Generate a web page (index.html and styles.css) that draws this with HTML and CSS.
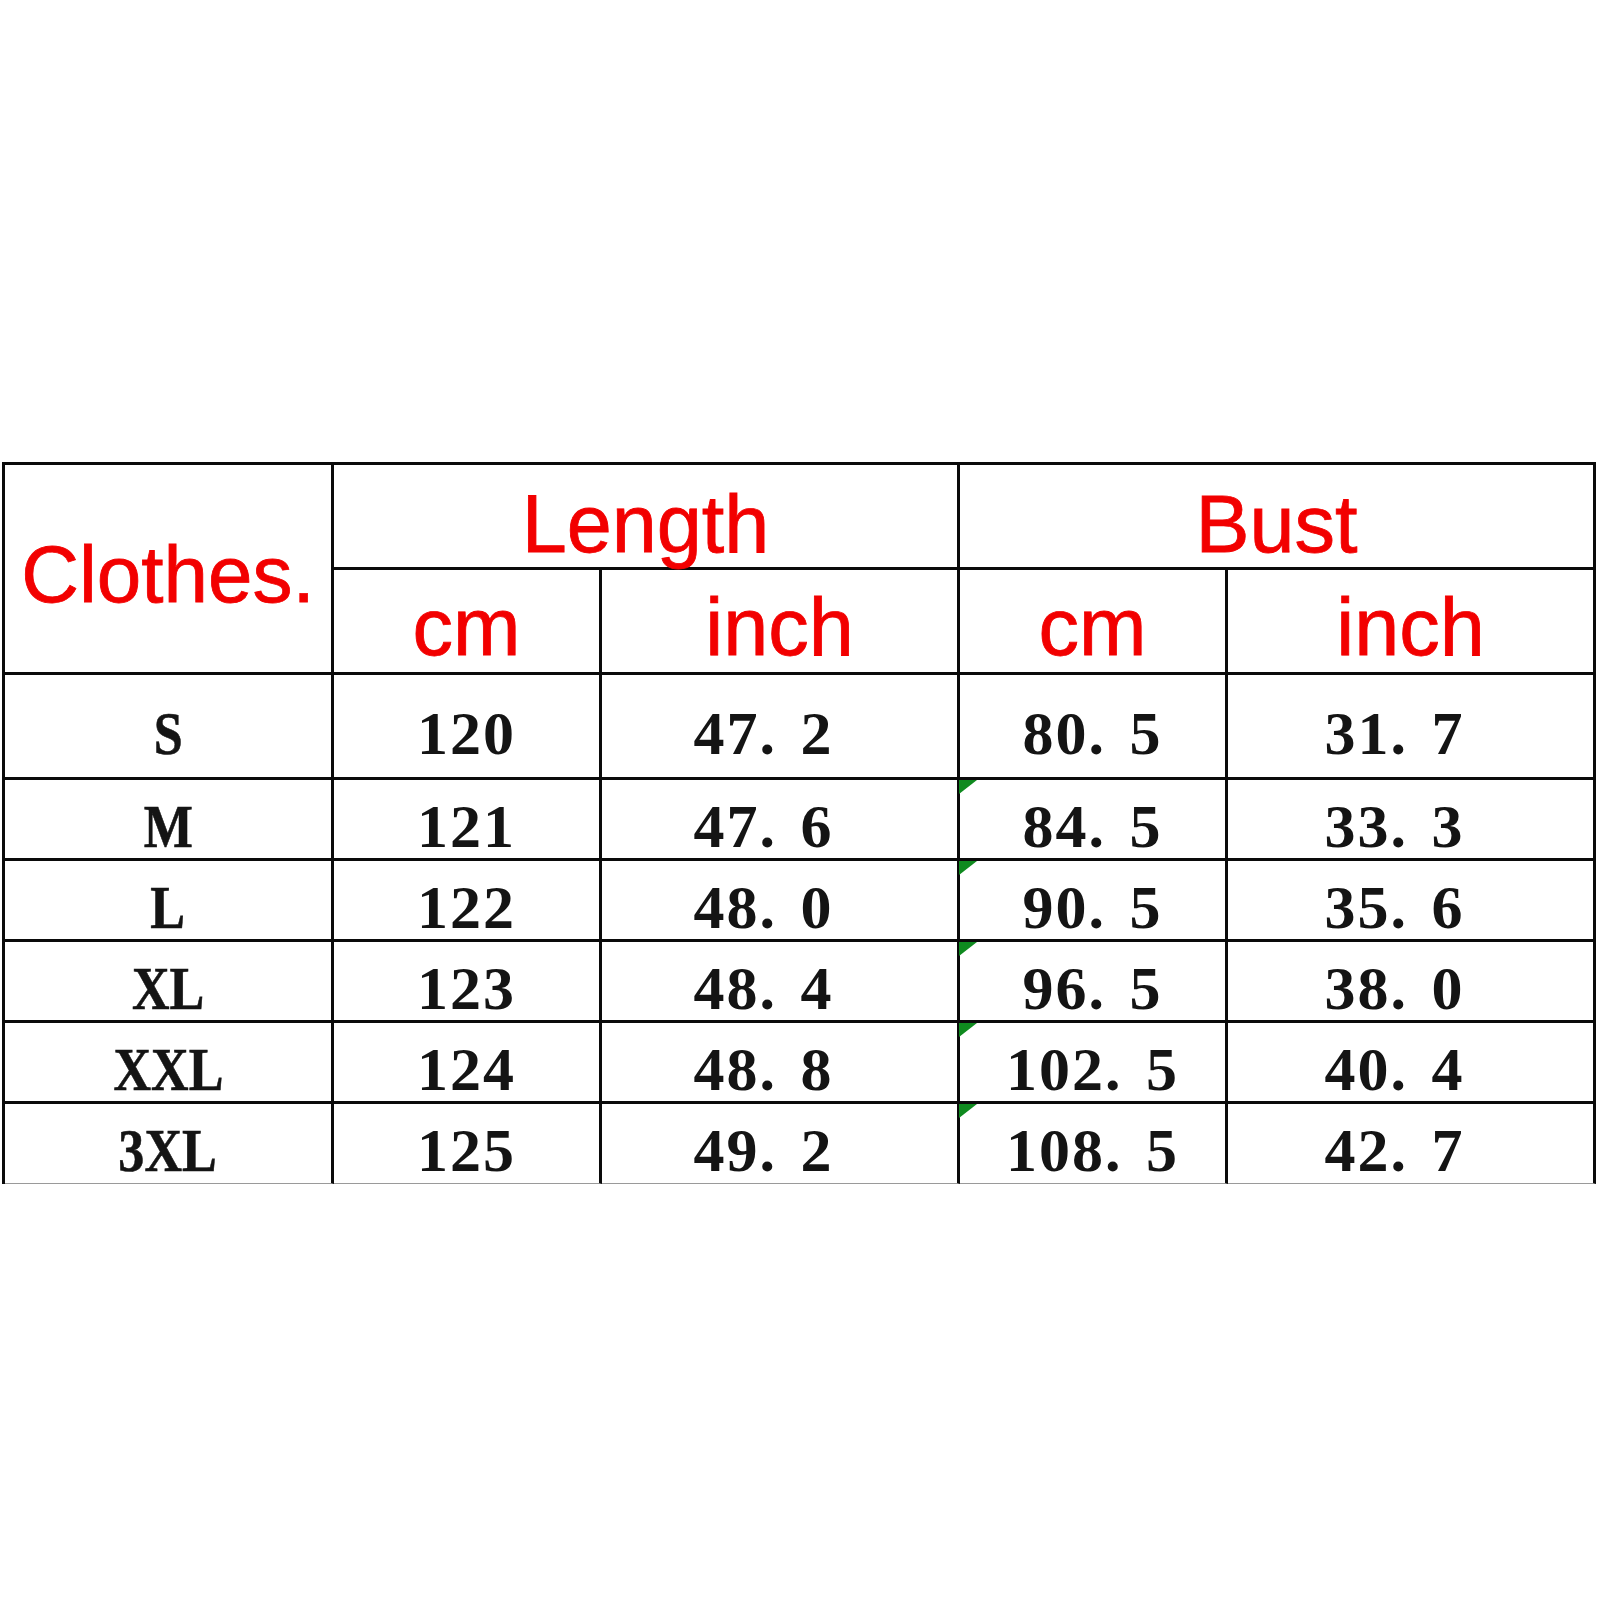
FILE: index.html
```html
<!DOCTYPE html>
<html lang="en">
<head>
<meta charset="utf-8">
<title>Size chart</title>
<link rel="stylesheet" href="styles.css">
</head>
<body>
<div class="chart">
  <div class="cell head head-clothes">Clothes.</div>
  <div class="cell head head-group span2">Length</div>
  <div class="cell head head-group span2">Bust</div>
  <div class="cell head head-unit">cm</div>
  <div class="cell head head-unit">inch</div>
  <div class="cell head head-unit">cm</div>
  <div class="cell head head-unit">inch</div>

  <div class="cell data"><span class="size">S</span></div>
  <div class="cell data">120</div>
  <div class="cell data inch">47. 2</div>
  <div class="cell data">80. 5</div>
  <div class="cell data inch">31. 7</div>

  <div class="cell data"><span class="size">M</span></div>
  <div class="cell data">121</div>
  <div class="cell data inch">47. 6</div>
  <div class="cell data flag">84. 5</div>
  <div class="cell data inch">33. 3</div>

  <div class="cell data"><span class="size">L</span></div>
  <div class="cell data">122</div>
  <div class="cell data inch">48. 0</div>
  <div class="cell data flag">90. 5</div>
  <div class="cell data inch">35. 6</div>

  <div class="cell data"><span class="size">XL</span></div>
  <div class="cell data">123</div>
  <div class="cell data inch">48. 4</div>
  <div class="cell data flag">96. 5</div>
  <div class="cell data inch">38. 0</div>

  <div class="cell data"><span class="size">XXL</span></div>
  <div class="cell data">124</div>
  <div class="cell data inch">48. 8</div>
  <div class="cell data flag">102. 5</div>
  <div class="cell data inch">40. 4</div>

  <div class="cell data last"><span class="size">3XL</span></div>
  <div class="cell data last">125</div>
  <div class="cell data last inch">49. 2</div>
  <div class="cell data last flag">108. 5</div>
  <div class="cell data last inch">42. 7</div>
</div>
</body>
</html>
```

FILE: styles.css
```css
html, body {
  margin: 0;
  padding: 0;
  background: #ffffff;
}

.chart {
  margin-top: 462px;
  margin-left: 2px;
  width: 1594px;
  box-sizing: border-box;
  display: grid;
  grid-template-columns: 329px 268px 358px 268px 368px;
  grid-template-rows: 105px 105px 105px 81px 81px 81px 81px 80px;
  border-left: 3px solid #0a0a0a;
  border-top: 3px solid #0a0a0a;
}

.cell {
  box-sizing: border-box;
  border-right: 3px solid #0a0a0a;
  border-bottom: 3px solid #0a0a0a;
  display: flex;
  align-items: center;
  justify-content: center;
  position: relative;
  white-space: pre;
}

.head {
  font-family: "Liberation Sans", Arial, sans-serif;
  font-size: 81px;
  color: #f20000;
  line-height: normal;
  -webkit-text-stroke: 0.8px #f20000;
}

.head-clothes {
  grid-row: span 2;
  padding-top: 13px;
  font-size: 80px;
}

.span2 {
  grid-column: span 2;
}

.head-group {
  padding-top: 16px;
}

.head-unit {
  padding-top: 12px;
}

.data {
  font-family: "Liberation Serif", "Times New Roman", serif;
  font-weight: bold;
  font-size: 62px;
  color: #141414;
  letter-spacing: 2px;
  word-spacing: 6px;
  padding-top: 14px;
}

.inch {
  padding-right: 32px;
}

.size {
  display: inline-block;
  transform: scaleX(0.84);
  letter-spacing: 0;
  -webkit-text-stroke: 0.6px #141414;
}

.last {
  border-bottom: 1px solid #9a9a9a;
}

.flag::before {
  content: "";
  position: absolute;
  left: -1px;
  top: 0;
  width: 0;
  height: 0;
  border-top: 14px solid #0f8a1f;
  border-right: 18px solid transparent;
}
```
